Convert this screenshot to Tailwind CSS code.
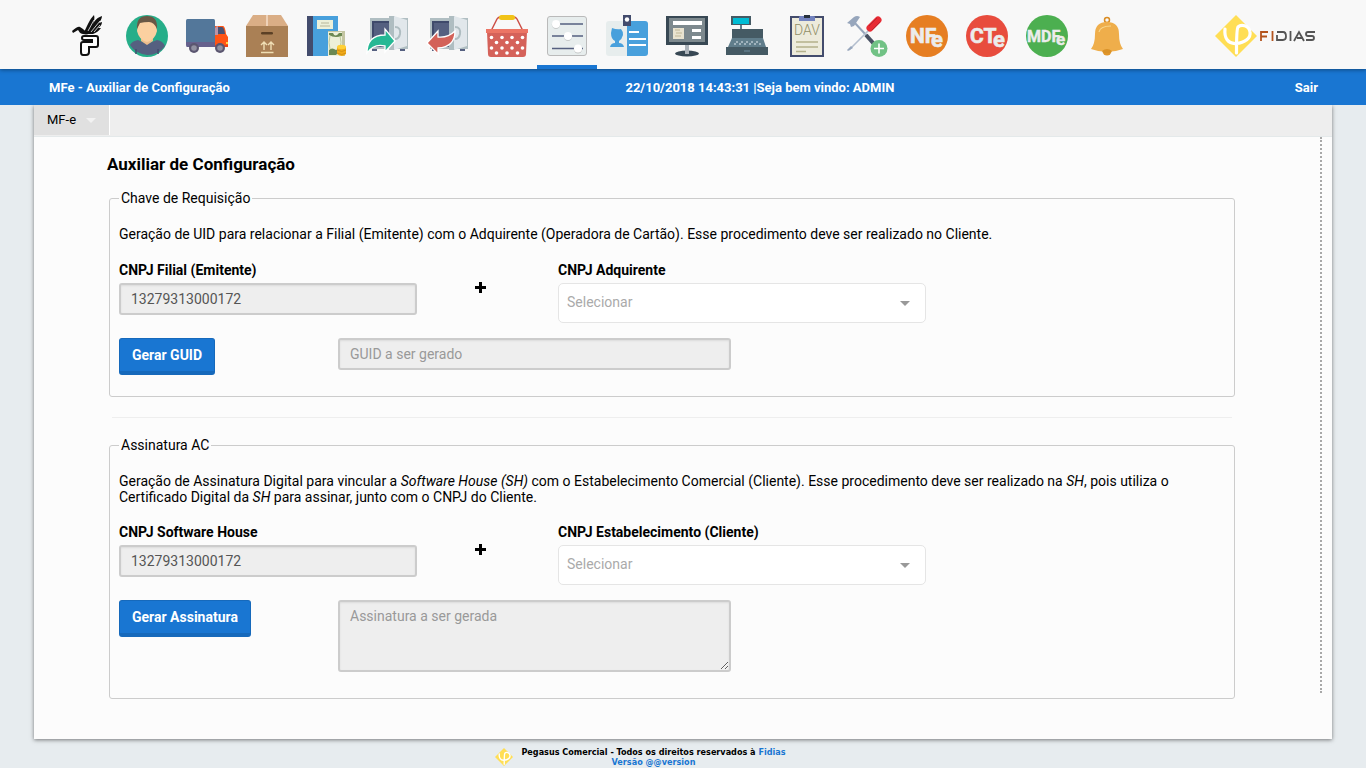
<!DOCTYPE html>
<html lang="pt-BR">
<head>
<meta charset="utf-8">
<meta name="viewport" content="width=device-width, initial-scale=1">
<title>MFe - Auxiliar de Configuração</title>
<script src="https://cdn.jsdelivr.net/npm/@tailwindcss/browser@4"></script>
</head>
<body class="flex min-h-screen flex-col bg-[#e7ecef] font-['Roboto',sans-serif] text-sm leading-4 text-black">

<svg class="hidden" aria-hidden="true">
  <symbol id="phi" viewBox="0 0 42 42">
    <path d="M21 0L42 21 21 42 0 21z" fill="#ffde55"/>
    <path d="M10 14C9 23 13 29 21 28.500C30 28 36 23 35 17C34 10 26 9 23 12Q21.500 14 21.500 38" fill="none" stroke="#fff" stroke-width="3.200" stroke-linecap="round" stroke-linejoin="round"/>
  </symbol>
  <symbol id="safe" viewBox="0 0 42 42">
    <path d="M6 33h5v3H6zM34 33h5v3h-5z" fill="#556080"/>
    <path d="M4 3h38v31H4z" fill="#b0bec2"/>
    <path d="M6 6h18v26H6z" fill="#3f4a6b"/>
    <path d="M8 8h16v24H8z" fill="#556080"/>
    <path d="M23 1h6v34h-6z" fill="#afbdc1"/>
    <path d="M28 1l13 4v26l-13 4z" fill="#e1e7eb"/>
    <path d="M29 12q6 0 5 7q-1 5-5 5" fill="none" stroke="#afbdc1" stroke-width="2"/>
  </symbol>
</svg>

<header class="relative z-20 flex h-[69px] items-center justify-between bg-[#f8f8f8] pr-[50px] pl-[57px] shadow-[0_1px_4px_rgba(0,0,0,0.4)]">
  <nav aria-label="Módulos" class="flex h-full">
    <a href="#" aria-label="Pegasus" class="flex w-[60px] items-center justify-center pt-[3px]">
      <svg class="size-[42px]" viewBox="0 0 42 42">
        <path d="M6 16C9 14 11 11 14 12L17 14C20 17 22 18 25 17C24 19 21 20 17 19C14 19 13 16 12 15L7 18z" fill="#111"/>
        <path d="M18 17C22 10 23 5 28 0C29 3 28 6 27 9C29 5 31 3 36 1C36 4 34 6 33 8L36 7C36 10 34 12 32 13L35 13C33 16 30 18 27 19L22 19z" fill="#111"/>
        <path d="M22 16L28 5M25 17L34 6M28 17L34 10" stroke="#f8f8f8" stroke-width=".8"/>
        <path d="M18 21H30Q32 21 32 23V30Q32 32 30 32H23V37Q23 40 20 40H17Q15 40 15 37V29Q15 27 17 27H26V25H18Q16 25 16 23Q16 21 18 21z" fill="#fff" stroke="#111" stroke-width="2"/>
      </svg>
    </a>
    <a href="#" aria-label="Clientes" class="flex w-[60px] items-center justify-center pt-[3px]">
      <svg class="size-[42px]" viewBox="0 0 42 42">
        <circle cx="21" cy="21" r="21" fill="#26ae89"/>
        <path d="M4 30Q6 26 12 25L21 29L31 25Q37 26 39 31A21 21 0 0 1 4 30z" fill="#556080"/>
        <path d="M15 23h12v3l-6 4l-6-4z" fill="#edbd8c"/>
        <path d="M12 8q9-5 18 0l1 8q-2 9-10 11q-8-2-10-11z" fill="#fbd0a0"/>
        <path d="M11 14Q10 1 21 1Q32 1 31 14Q28 7 23 7Q18 7 14 8z" fill="#695845"/>
        <path d="M10 34v5M32 34v5" stroke="#434c6d" stroke-width="1.5"/>
      </svg>
    </a>
    <a href="#" aria-label="Fornecedores" class="flex w-[60px] items-center justify-center pt-[3px]">
      <svg class="size-[42px]" viewBox="0 0 42 42">
        <rect y="4" width="29" height="26" rx="1.5" fill="#53779a"/>
        <path d="M0 27h32v5H1q-1 0-1-2z" fill="#66618d"/>
        <path d="M29 11h8q2 0 3 8l2 3v9H29z" fill="#ff5415"/>
        <path d="M29 13q1-2 3-2v9h-3z" fill="#bb93a6"/><path d="M32 12h4q2 0 3 7h-7z" fill="#4a5272"/>
        <path d="M40 27h2v2h-2z" fill="#ffd342"/><path d="M29 32h13v-2H29z" fill="#ed4012"/>
        <circle cx="8" cy="33" r="5" fill="#5b5670"/><circle cx="8" cy="33" r="2.8" fill="#9291a1"/>
        <circle cx="34" cy="33" r="5" fill="#5b5670"/><circle cx="34" cy="33" r="2.8" fill="#9291a1"/>
      </svg>
    </a>
    <a href="#" aria-label="Produtos" class="flex w-[60px] items-center justify-center pt-[3px]">
      <svg class="size-[42px]" viewBox="0 0 42 42">
        <path d="M7 0h28l7 11H0z" fill="#daae86"/><path d="M20 0h2v12h-2z" fill="#efd2b8"/>
        <path d="M0 11h42v31H0z" fill="#aa8055"/>
        <rect x="15" y="17" width="12" height="2.6" rx="1.3" fill="#5b4025"/>
        <path d="M18 35v-7m-3 2l3-3 3 3M25 35v-7m-3 2l3-3 3 3M15 37.500h12.500" fill="none" stroke="#f0deb4" stroke-width="1.4"/>
      </svg>
    </a>
    <a href="#" aria-label="Financeiro" class="flex w-[60px] items-center justify-center pt-[3px]">
      <svg class="size-[42px]" viewBox="0 0 42 42">
        <path d="M1 1h31v40H1z" fill="#48a0dc"/><path d="M1 1h6v40H1z" fill="#434c6d"/>
        <path d="M11 5h16v9H11z" fill="#ecf0d9"/><path d="M15 8h8M14 11h10" stroke="#b6b69a"/>
        <path d="M22 16h17v25H22z" fill="#c3c5a2"/><path d="M22 17h14v24H22z" fill="#edf0d9"/>
        <path d="M23 18h4q2 5 6 0h3v3q-3 1-6 1q-4 0-7-2zM23 40v-5q3-3 7 0q3-2 5 0v2q-4 1-5 3z" fill="#6c8953"/>
        <path d="M24 21q-2 6 0 13M34 21q2 6 0 13" fill="none" stroke="#bdc89b"/>
        <path d="M31 32v7q5 4 9 0v-7z" fill="#f0ab1a"/><ellipse cx="35.500" cy="32" rx="4.500" ry="2.200" fill="#ffd036"/>
        <path d="M31 35q5 3 9 0M31 38q5 3 9 0" fill="none" stroke="#ce8a12" stroke-width=".8"/>
      </svg>
    </a>
    <a href="#" aria-label="Saída do caixa" class="flex w-[60px] items-center justify-center pt-[3px]">
      <svg class="size-[42px]" viewBox="0 0 42 42"><use href="#safe"/>
        <path d="M1 38Q1 20 19 20V14L29 26L19 37V31Q8 28 1 38z" fill="#25b894" stroke="#fff" stroke-width="1.300"/>
      </svg>
    </a>
    <a href="#" aria-label="Entrada do caixa" class="flex w-[60px] items-center justify-center pt-[3px]">
      <svg class="size-[42px]" viewBox="0 0 42 42"><use href="#safe"/>
        <path d="M29 16Q29 32 12 33V39L1 28L12 16V22Q22 23 29 16z" fill="#d36259" stroke="#fff" stroke-width="1.300"/>
      </svg>
    </a>
    <a href="#" aria-label="Vendas" class="flex w-[60px] items-center justify-center pt-[3px]">
      <svg class="size-[42px]" viewBox="0 0 42 42">
        <path d="M5 16L11 4Q12 2 15 2H27Q30 2 31 4L37 16" fill="none" stroke="#cc5048" stroke-width="1.500"/>
        <rect x="13" width="16" height="5" rx="2.500" fill="#f1c318"/>
        <path d="M1 17h40l-1 22q0 3-3 3H5q-3 0-3-3z" fill="#d5625a"/><path d="M0 14h42v4H0z" fill="#ec7565"/>
        <g fill="#fff"><circle cx="5.500" cy="22.500" r="1.800"/><circle cx="16" cy="22.500" r="1.800"/><circle cx="26" cy="22.500" r="1.800"/><circle cx="36.500" cy="22.500" r="1.800"/><circle cx="10.500" cy="27.500" r="1.800"/><circle cx="21" cy="27.500" r="1.800"/><circle cx="31.500" cy="27.500" r="1.800"/><circle cx="5.500" cy="33" r="1.800"/><circle cx="16" cy="33" r="1.800"/><circle cx="26" cy="33" r="1.800"/><circle cx="36.500" cy="33" r="1.800"/><circle cx="10.500" cy="38" r="1.800"/><circle cx="21" cy="38" r="1.800"/><circle cx="31.500" cy="38" r="1.800"/></g>
      </svg>
    </a>
    <a href="#" aria-label="Configurações" aria-current="page" class="flex w-[60px] items-center justify-center border-b-4 border-[#1976d2] pt-[7px]">
      <svg class="size-[42px]" viewBox="0 0 42 42">
        <rect x="1.500" y="1.500" width="39" height="39" rx="2.500" fill="#e7eded" stroke="#bababa"/>
        <path d="M6 9h31M6 21h31M6 33.500h31" stroke="#556080" stroke-width="1.600"/>
        <g fill="#c6c9c9"><circle cx="10" cy="9.800" r="4.200"/><circle cx="22" cy="21.800" r="4.200"/><circle cx="32" cy="34.300" r="4.200"/></g>
        <g fill="#fff"><circle cx="10" cy="9" r="4"/><circle cx="22" cy="21" r="4"/><circle cx="32" cy="33.500" r="4"/></g>
      </svg>
    </a>
    <a href="#" aria-label="Funcionários" class="flex w-[60px] items-center justify-center pt-[3px]">
      <svg class="size-[42px]" viewBox="0 0 42 42">
        <path d="M3 6h18v35H3q-3 0-3-3V9q0-3 3-3z" fill="#e7eded"/><path d="M21 6h18q3 0 3 3v29q0 3-3 3H21z" fill="#48a0dc"/>
        <path d="M17 0h8v11h-8z" fill="#434c6d"/><circle cx="21" cy="4.500" r="2.200" fill="#fff"/>
        <path d="M6 13q5 2 9 1q2 2 2 6q-1 4-4 6v2q4 0 5 4H4q1-4 5-4v-2q-4-2-4-8z" fill="#48a0dc"/>
        <path d="M23 17h10M23 24h17M23 30h17" stroke="#fff" stroke-width="2"/>
      </svg>
    </a>
    <a href="#" aria-label="Terminal" class="flex w-[60px] items-center justify-center pt-[3px]">
      <svg class="size-[42px]" viewBox="0 0 42 42">
        <ellipse cx="21" cy="38.500" rx="12" ry="3" fill="#384854"/><path d="M19 29h4v10h-4z" fill="#acb3ba"/>
        <path d="M0 1h42v29H0z" fill="#384854"/><path d="M3 3h36v24H3z" fill="#7d898e"/><path d="M7 6h29v4H7zM26 14h9v3h-9zM26 21h9v3h-9z" fill="#fff"/>
        <path d="M7 13h11v11H7z" fill="#e9e3d0"/><path d="M9 15h5M10 18h6M9 21h6" stroke="#bfb695"/>
      </svg>
    </a>
    <a href="#" aria-label="Caixa" class="flex w-[60px] items-center justify-center pt-[3px]">
      <svg class="size-[42px]" viewBox="0 0 42 42">
        <path d="M5 1h20v9H5z" fill="#455a64"/><path d="M7 3h16v6H7z" fill="#00bcd4"/><path d="M14 10h2v5h-2z" fill="#607d8b"/>
        <path d="M6 14h31v10H6z" fill="#455a64"/><path d="M6 23h31l3 9H2z" fill="#607d8b"/><path d="M0 32h42v8H0z" fill="#455a64"/>
        <path d="M10 27h25M8 29h28" stroke="#b5c5ce" stroke-width="1.500" stroke-dasharray="2 3"/><path d="M18 36h6" stroke="#607d8b" stroke-width="1.500"/>
      </svg>
    </a>
    <a href="#" aria-label="DAV" class="flex w-[60px] items-center justify-center pt-[3px]">
      <svg class="size-[42px]" viewBox="0 0 42 42">
        <path d="M4 1h34v41H4z" fill="#434c6d"/><path d="M6 3h30v37H6z" fill="#edebdc"/>
        <path d="M13 2q0-1 2-1h12q2 0 2 1v4H13z" fill="#7383bf"/><path d="M18 0h6v3h-6z" fill="#26303c"/>
        <text x="8" y="20" font-family="Roboto,sans-serif" font-size="14" font-weight="300" fill="#918f68">DAV</text>
        <path d="M10 27h22M10 32h22M10 36.500h10" stroke="#b4b18b" stroke-width="1.500"/>
      </svg>
    </a>
    <a href="#" aria-label="Ferramentas" class="flex w-[60px] items-center justify-center pt-[3px]">
      <svg class="size-[42px]" viewBox="0 0 42 42">
        <path d="M7 6L21 21" stroke="#97a6bc" stroke-width="2"/><path d="M20 20L28 29" stroke="#485163" stroke-width="4"/>
        <path d="M1 8L8 2Q11 0 14 2L8 11L5 12L4 9z" fill="#97a6bc"/>
        <path d="M24 14L3 35" stroke="#b3bece" stroke-width="1.600"/><path d="M5 31L7 33 2 36 1 35z" fill="#97a6bc"/>
        <path d="M24 13L32 5" stroke="#e82b34" stroke-width="7" stroke-linecap="round"/><path d="M23 11L31 3M26 15L34 7" stroke="#bb2430"/>
        <circle cx="33" cy="33.500" r="8.500" fill="#71c285"/><path d="M28 33.500h10M33 28.500v10" stroke="#fff" stroke-width="1.600"/>
      </svg>
    </a>
    <a href="#" aria-label="NFe" class="flex w-[60px] items-center justify-center pt-[3px]">
      <svg class="size-[42px]" viewBox="0 0 42 42"><circle cx="21" cy="21" r="21" fill="#e67e22"/><g font-family="Roboto,sans-serif" font-weight="700" fill="#ececec" stroke="#ececec" stroke-width=".6"><text x="4" y="28" font-size="21">NF</text><text x="25" y="32" font-size="22">e</text></g></svg>
    </a>
    <a href="#" aria-label="CTe" class="flex w-[60px] items-center justify-center pt-[3px]">
      <svg class="size-[42px]" viewBox="0 0 42 42"><circle cx="21" cy="21" r="21" fill="#e84c3d"/><g font-family="Roboto,sans-serif" font-weight="700" fill="#ececec" stroke="#ececec" stroke-width=".6"><text x="4" y="28" font-size="21">CT</text><text x="27" y="32" font-size="22">e</text></g></svg>
    </a>
    <a href="#" aria-label="MDFe" class="flex w-[60px] items-center justify-center pt-[3px]">
      <svg class="size-[42px]" viewBox="0 0 42 42"><circle cx="21" cy="21" r="21" fill="#4caf50"/><g font-family="Roboto,sans-serif" font-weight="700" fill="#ececec" stroke="#ececec" stroke-width=".4"><text x="1" y="27" font-size="16">MDF</text><text x="30" y="30" font-size="17">e</text></g></svg>
    </a>
    <a href="#" aria-label="Notificações" class="flex w-[60px] items-center justify-center pt-[3px]">
      <svg class="size-[42px]" viewBox="0 0 42 42">
        <circle cx="21" cy="5" r="2.500" fill="none" stroke="#da8c22" stroke-width="1.500"/><circle cx="21" cy="36" r="4.500" fill="#e1962a"/>
        <path d="M9 19Q9 7 21 7Q33 7 33 19Q33 29 37 34Q29 37 21 37Q13 37 5 34Q9 29 9 19z" fill="#efae4b"/>
        <path d="M16 36Q21 32 26 36L24 38H18z" fill="#da9228"/><path d="M13 17Q14 11 25 11" fill="none" stroke="#f7d78e" stroke-width="1.200"/>
      </svg>
    </a>
  </nav>
  <a href="#" aria-label="Fidias" class="flex pt-[3px]">
    <svg class="h-[42px] w-[101px]" viewBox="0 0 101 42">
      <use href="#phi" width="42" height="42"/>
      <g fill="none" stroke-width="1.800">
        <path d="M46 26V17H53M46 21.500H52M57.500 16V26" stroke="#b3541e"/>
        <path d="M62 17H68Q71 17 71 21.500Q71 25 68 25H62V20M75.500 16V26M79 26L84 17L89 26M82 23H88M100 17H93Q91 17 91 19Q91 21 93 21H97Q99 21 99 23Q99 25 97 25H91" stroke="#555"/>
      </g>
    </svg>
  </a>
</header>

<div class="relative z-10 grid h-9 grid-cols-[577fr_268fr_424fr] items-center bg-[#1976d2] pt-0.5 pr-12 pl-[49px] text-[13px] font-bold whitespace-nowrap text-white">
  <h1>MFe - Auxiliar de Configuração</h1>
  <p class="text-center">22/10/2018 14:43:31 |Seja bem vindo: ADMIN</p>
  <a href="#" class="justify-self-end">Sair</a>
</div>

<main class="mx-[34px] flex flex-1 flex-col bg-[#fcfcfc] shadow-[0_1px_4px_rgba(0,0,0,0.5)]">
  <nav aria-label="Menu do módulo" class="flex h-8 border-b border-[#e4e9ea] bg-[#eee]">
    <button type="button" class="box-content flex h-[30px] items-center gap-2.5 border-r border-white bg-[#e0e0e0] px-[13px] text-[13px]">MF-e
      <svg class="h-[5px] w-2.5" viewBox="0 0 10 5"><path d="M0 0h10L5 5z" fill="#f2f2f2"/></svg>
    </button>
  </nav>

  <section class="mr-2.5 mb-[46px] flex-1 border-r-2 border-dotted border-[#a8a8a8] pt-[17px] pr-[85px] pl-[73px]">
    <h2 class="text-[17px] leading-5 font-bold">Auxiliar de Configuração</h2>

    <form class="-mb-1.5">
      <fieldset class="mt-[17px] ml-0.5 rounded-[3px] border border-[#ccc] px-[9px] pb-[21px]">
        <legend class="px-0.5 leading-[15px]">Chave de Requisição</legend>
        <p class="mt-5">Geração de UID para relacionar a Filial (Emitente) com o Adquirente (Operadora de Cartão). Esse procedimento deve ser realizado no Cliente.</p>
        <div class="mt-5 grid grid-cols-[298fr_141fr_368fr_299fr]">
          <div>
            <label for="filial" class="block font-bold">CNPJ Filial (Emitente)</label>
            <input id="filial" type="text" readonly value="13279313000172" class="mt-[5px] block h-8 w-full rounded-[3px] border-2 border-[#ccc] bg-[#eee] px-2.5 text-[#555] shadow-[inset_0_1px_2px_rgba(0,0,0,0.08)]">
          </div>
          <svg class="mt-5 ml-[58px] size-[11px]" viewBox="0 0 11 11" aria-hidden="true"><path d="M5.500 0v11M0 5.500h11" stroke="#000" stroke-width="3"/></svg>
          <div>
            <label for="adquirente" class="block font-bold">CNPJ Adquirente</label>
            <div class="relative mt-[5px]">
              <select id="adquirente" class="block h-10 w-full appearance-none rounded-[5px] border border-[#e5e5e5] bg-white px-2 pb-0.5 text-[#aaa]"><option>Selecionar</option></select>
              <svg class="pointer-events-none absolute top-[18px] right-4 h-[5px] w-2.5" viewBox="0 0 10 5" aria-hidden="true"><path d="M0 0h10L5 5z" fill="#999"/></svg>
            </div>
          </div>
        </div>
        <div class="mt-[15px] grid grid-cols-[219fr_393fr_494fr] items-start">
          <button type="button" class="h-[37px] justify-self-start rounded-[3px] border border-b-4 border-[#1669bb] bg-[#1976d2] px-3 font-bold text-white">Gerar GUID</button>
          <input type="text" readonly aria-label="GUID" placeholder="GUID a ser gerado" class="block h-8 w-full rounded-[3px] border-2 border-[#ccc] bg-[#eee] px-2.5 shadow-[inset_0_1px_2px_rgba(0,0,0,0.08)] placeholder:text-[#999]">
        </div>
      </fieldset>

      <hr class="mt-5 mr-[3px] ml-[5px] border-[#eee]">

      <fieldset class="mt-5 ml-0.5 rounded-[3px] border border-[#ccc] px-[9px] pb-[26px]">
        <legend class="px-0.5 leading-[15px]">Assinatura AC</legend>
        <p class="mt-5">Geração de Assinatura Digital para vincular a <em>Software House (SH)</em> com o Estabelecimento Comercial (Cliente). Esse procedimento deve ser realizado na <em>SH</em>, pois utiliza o Certificado Digital da <em>SH</em> para assinar, junto com o CNPJ do Cliente.</p>
        <div class="mt-[19px] grid grid-cols-[298fr_141fr_368fr_299fr]">
          <div>
            <label for="house" class="block font-bold">CNPJ Software House</label>
            <input id="house" type="text" readonly value="13279313000172" class="mt-[5px] block h-8 w-full rounded-[3px] border-2 border-[#ccc] bg-[#eee] px-2.5 text-[#555] shadow-[inset_0_1px_2px_rgba(0,0,0,0.08)]">
          </div>
          <svg class="mt-5 ml-[58px] size-[11px]" viewBox="0 0 11 11" aria-hidden="true"><path d="M5.500 0v11M0 5.500h11" stroke="#000" stroke-width="3"/></svg>
          <div>
            <label for="estabelecimento" class="block font-bold">CNPJ Estabelecimento (Cliente)</label>
            <div class="relative mt-[5px]">
              <select id="estabelecimento" class="block h-10 w-full appearance-none rounded-[5px] border border-[#e5e5e5] bg-white px-2 pb-0.5 text-[#aaa]"><option>Selecionar</option></select>
              <svg class="pointer-events-none absolute top-[18px] right-4 h-[5px] w-2.5" viewBox="0 0 10 5" aria-hidden="true"><path d="M0 0h10L5 5z" fill="#999"/></svg>
            </div>
          </div>
        </div>
        <div class="mt-[15px] grid grid-cols-[219fr_393fr_494fr] items-start">
          <button type="button" class="h-[37px] justify-self-start rounded-[3px] border border-b-4 border-[#1669bb] bg-[#1976d2] px-3 font-bold text-white">Gerar Assinatura</button>
          <textarea readonly aria-label="Assinatura" placeholder="Assinatura a ser gerada" class="block h-[72px] w-full resize rounded-[3px] border-2 border-[#ccc] bg-[#eee] px-2.5 py-1.5 shadow-[inset_0_1px_2px_rgba(0,0,0,0.08)] placeholder:text-[#999]"></textarea>
        </div>
      </fieldset>
    </form>
  </section>
</main>

<footer class="flex h-[29px] justify-center gap-2 pt-2 pr-[85px] font-['DejaVu_Sans_Condensed','DejaVu_Sans',sans-serif] text-[9px] leading-[10px] font-bold">
  <svg class="mt-px size-[18px]" aria-hidden="true"><use href="#phi" width="18" height="18"/></svg>
  <div class="text-center">
    <p>Pegasus Comercial - Todos os direitos reservados à <a href="#" class="text-[#1976d2]">Fidias</a></p>
    <p><a href="#" class="text-[#1976d2]">Versão @@version</a></p>
  </div>
</footer>
</body>
</html>
